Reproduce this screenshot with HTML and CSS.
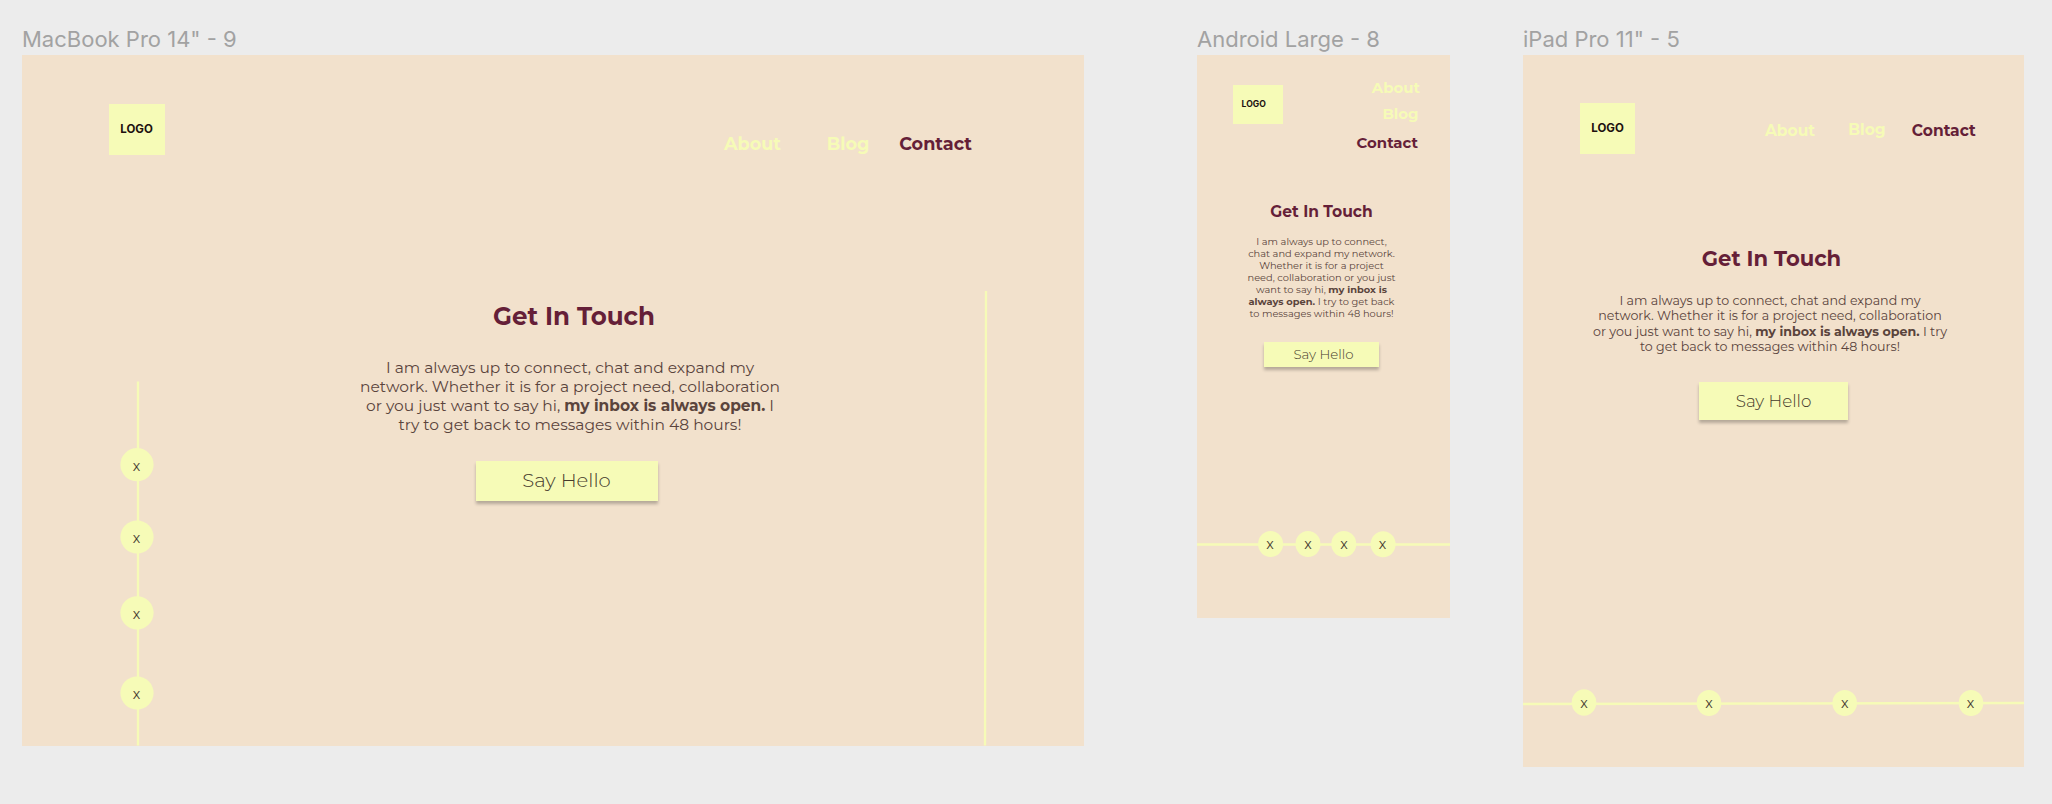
FILE: index.html
```html
<!DOCTYPE html>
<html lang="en">
<head>
<meta charset="utf-8">
<title>Contact page frames</title>
<link rel="stylesheet" href="styles.css">
</head>
<body>
<main class="canvas">
  <section class="frame laptop">
    <h2 class="frame-name">MacBook Pro 14" - 9</h2>
    <div class="board">
      <header class="top">
        <div class="logo">LOGO</div>
        <nav class="nav"><a>About</a><a>Blog</a><a class="current">Contact</a></nav>
      </header>
      <div class="contact">
        <h1 class="title">Get In Touch</h1>
        <p class="copy">I am always up to connect, chat and expand my<br>network. Whether it is for a project need, collaboration<br>or you just want to say hi, <b>my inbox is always open.</b> I<br>try to get back to messages within 48 hours!</p>
        <a class="button">Say Hello</a>
      </div>
      <svg class="rail" viewBox="0 0 1062 690.5">
        <path d="M116 326.5V690.5M964 236L963 690.5"/>
        <circle cx="115" cy="409.7" r="16.6"/><circle cx="115" cy="482" r="16.6"/><circle cx="115" cy="557.8" r="16.6"/><circle cx="115" cy="638" r="16.6"/>
        <text x="114.6" y="415.5">x</text><text x="114.6" y="487.8">x</text><text x="114.6" y="563.6">x</text><text x="114.6" y="643.8">x</text>
      </svg>
    </div>
  </section>

  <section class="frame phone">
    <h2 class="frame-name">Android Large - 8</h2>
    <div class="board">
      <header class="top">
        <div class="logo">LOGO</div>
        <nav class="nav"><a>About</a><a>Blog</a><a class="current">Contact</a></nav>
      </header>
      <div class="contact">
        <h1 class="title">Get In Touch</h1>
        <p class="copy">I am always up to connect,<br>chat and expand my network.<br>Whether it is for a project<br>need, collaboration or you just<br>want to say hi, <b>my inbox is<br>always open.</b> I try to get back<br>to messages within 48 hours!</p>
        <a class="button">Say Hello</a>
      </div>
      <svg class="rail" viewBox="0 0 253 562.5">
        <path d="M0 489.5H253"/>
        <ellipse cx="73.6" cy="489" rx="12.5" ry="13"/><ellipse cx="111" cy="489" rx="12.5" ry="13"/><ellipse cx="146.8" cy="489" rx="12.5" ry="13"/><ellipse cx="186.1" cy="489.3" rx="12.5" ry="13"/>
        <text x="73" y="494">x</text><text x="111" y="494">x</text><text x="147" y="494">x</text><text x="185.5" y="494">x</text>
      </svg>
    </div>
  </section>

  <section class="frame tablet">
    <h2 class="frame-name">iPad Pro 11" - 5</h2>
    <div class="board">
      <header class="top">
        <div class="logo">LOGO</div>
        <nav class="nav"><a>About</a><a>Blog</a><a class="current">Contact</a></nav>
      </header>
      <div class="contact">
        <h1 class="title">Get In Touch</h1>
        <p class="copy">I am always up to connect, chat and expand my<br>network. Whether it is for a project need, collaboration<br>or you just want to say hi, <b>my inbox is always open.</b> I try<br>to get back to messages within 48 hours!</p>
        <a class="button">Say Hello</a>
      </div>
      <svg class="rail" viewBox="0 0 501 712">
        <path d="M0 649L501 648"/>
        <ellipse cx="61" cy="647.5" rx="12.3" ry="13.2"/><ellipse cx="186" cy="648" rx="12.3" ry="13"/><ellipse cx="321.7" cy="648" rx="12.3" ry="13"/><ellipse cx="448" cy="648" rx="12.3" ry="13"/>
        <text x="61" y="653">x</text><text x="186" y="653">x</text><text x="321.7" y="653">x</text><text x="447.6" y="653">x</text>
      </svg>
    </div>
  </section>
</main>
</body>
</html>
```
FILE: styles.css
```css
* {
  box-sizing: border-box;
  margin: 0;
}

body {
  background: #ececec;
  font-family: Montserrat, Inter, sans-serif;
}

.canvas {
  display: flex;
  align-items: flex-start;
  width: 2052px;
  height: 804px;
  padding: 25px 0 0 22px;
  overflow: hidden;
}

.frame-name {
  height: 30px;
  font: 400 22px/28px Inter, sans-serif;
  color: #a2a2a2;
  white-space: nowrap;
}

.board {
  position: relative;
  background: #f2e1cc;
}

.top {
  display: flex;
  align-items: flex-start;
}

.logo {
  display: flex;
  align-items: center;
  justify-content: center;
  background: #f6fbb7;
  color: #20100f;
  font: 700 11.5px/14px Inter, sans-serif;
}

.nav {
  display: flex;
  font-weight: 700;
  color: #f6fbb7;
}

.current,
.title {
  color: #651f38;
}

.contact {
  display: flex;
  flex-direction: column;
  align-items: center;
  text-align: center;
  white-space: nowrap;
}

.title {
  font-weight: 700;
}

.copy {
  color: #5a443c;
}

.button {
  display: flex;
  align-items: center;
  justify-content: center;
  background: #f6fbb7;
  color: #453a2c;
  font-weight: 300;
  box-shadow: 0 3px 3px rgba(0, 0, 0, 0.25);
}

.rail {
  position: absolute;
  inset: 0;
  width: 100%;
  height: 100%;
}

.rail path {
  stroke: #f6fbb7;
  stroke-width: 2.3;
  fill: none;
}

.rail circle,
.rail ellipse {
  fill: #f6fbb7;
}

.rail text {
  font-size: 14px;
  text-anchor: middle;
  fill: #453a30;
}

/* Laptop */
.laptop { width: 1062px; margin-right: 113px; }
.laptop .board { height: 690.5px; }
.laptop .top { height: 100px; padding: 49px 0 0 87px; }
.laptop .logo { width: 56px; height: 51px; padding: 0 1px 1px 0; }
.laptop .nav { margin: 29.4px 0 0 559px; font-size: 17.65px; line-height: 22px; }
.laptop .nav a:nth-child(2) { margin: 0 29.8px 0 45.6px; }
.laptop .contact { width: 440px; margin: 145.5px 0 0 328px; }
.laptop .title { padding-left: 8px; font-size: 24.5px; line-height: 30px; }
.laptop .copy { margin: 27.5px 0 27px; font-size: 15.46px; line-height: 19px; }
.laptop .button { width: 182px; height: 40px; margin-right: 6px; padding: 0 1px 2px 0; font-size: 19.6px; }

/* Phone */
.phone { width: 253px; margin-right: 73px; }
.phone .board { height: 562.5px; }
.phone .top { justify-content: space-between; padding: 24px 30px 0 36px; }
.phone .logo { width: 49.5px; height: 38.5px; margin-top: 6px; padding-right: 8px; font-size: 8.6px; }
.phone .nav { flex-direction: column; align-items: flex-end; font-size: 14.9px; line-height: 18px; }
.phone .nav a:nth-child(2) { margin: 8px 1.5px 11px 0; }
.phone .nav .current { margin-right: 2px; }
.phone .contact { padding-right: 4px; margin-top: 49.8px; }
.phone .title { font-size: 15.5px; line-height: 20px; }
.phone .copy { margin: 12.9px 0 23.3px; font-size: 9.84px; line-height: 12px; }
.phone .button { width: 115px; height: 25px; padding: 0 0 1px 4px; font-size: 13.3px; }

/* Tablet */
.tablet { width: 501px; }
.tablet .board { height: 712px; }
.tablet .top { height: 99px; padding: 48px 0 0 57px; }
.tablet .logo { width: 55px; height: 51px; padding-bottom: 1px; }
.tablet .nav { margin: 18px 0 0 130px; font-size: 15.5px; line-height: 20px; }
.tablet .nav a:nth-child(2) { margin: -0.6px 26.2px 0 33px; }
.tablet .contact { width: 400px; margin: 92.4px 0 0 47px; }
.tablet .title { padding-left: 3px; font-size: 21.1px; line-height: 26px; }
.tablet .copy { margin: 20.3px 0 27.5px; font-size: 12.65px; line-height: 15.45px; }
.tablet .button { width: 149px; height: 37.5px; margin-left: 7px; font-size: 16.8px; }
```
